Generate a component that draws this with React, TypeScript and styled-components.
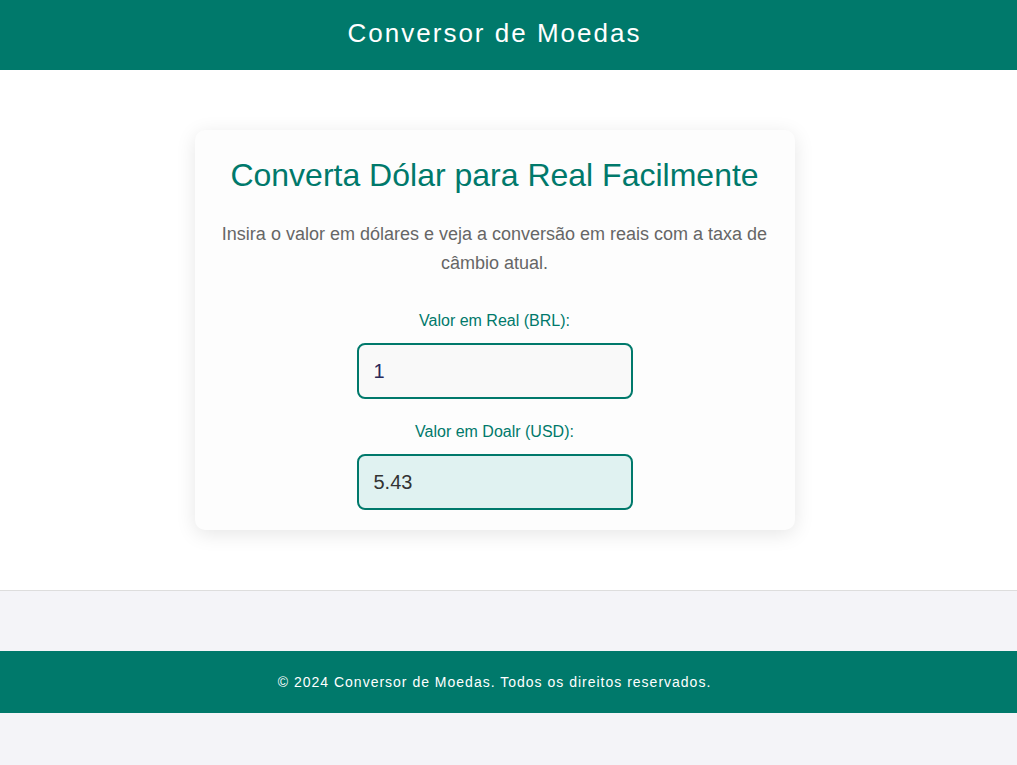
import React from "react";
import styled, { createGlobalStyle } from "styled-components";

const Global = createGlobalStyle`
  html, body { margin: 0; padding: 0; }
  body {
    background: #f4f4f8;
    font-family: "Liberation Sans", Arial, sans-serif;
  }
`;

const Header = styled.header`
  background: #00796b;
  height: 70px;
  box-sizing: border-box;
  display: flex;
  align-items: center;
  justify-content: center;
  padding: 0 28px 4px 0;
`;

const Brand = styled.h1`
  margin: 0;
  color: #ffffff;
  font-size: 26px;
  font-weight: 400;
  letter-spacing: 2px;
`;

const Main = styled.main`
  background: #ffffff;
  border-bottom: 1px solid #dddddd;
  padding: 60px 28px 60px 0;
  display: flex;
  justify-content: center;
`;

const Card = styled.section`
  width: 600px;
  box-sizing: border-box;
  background: #fdfdfd;
  border-radius: 10px;
  box-shadow: 0 4px 20px rgba(0, 0, 0, 0.1);
  padding: 26px 20px 20px;
  display: flex;
  flex-direction: column;
  align-items: center;
`;

const Title = styled.h2`
  margin: 0;
  color: #00796b;
  font-size: 32px;
  font-weight: 400;
  line-height: 38px;
`;

const Lead = styled.p`
  margin: 26px 0 0;
  color: #666666;
  font-size: 18px;
  line-height: 29px;
  text-align: center;
`;

const Field = styled.div<{ $first?: boolean }>`
  display: flex;
  flex-direction: column;
  align-items: center;
  margin-top: ${(p) => (p.$first ? "33px" : "23px")};
`;

const Label = styled.label`
  color: #00796b;
  font-size: 16px;
  line-height: 20px;
  margin-bottom: 12px;
`;

const Input = styled.input<{ $result?: boolean }>`
  width: 276px;
  height: 56px;
  box-sizing: border-box;
  border: 2px solid #00796b;
  border-radius: 8px;
  background: ${(p) => (p.$result ? "#e0f2f1" : "#f9f9f9")};
  color: ${(p) => (p.$result ? "#333333" : "#2a2a5a")};
  font-family: "Liberation Sans", Arial, sans-serif;
  font-size: 20px;
  padding: 0 15px;
  outline: none;
`;

const Spacer = styled.div`
  height: 60px;
`;

const Footer = styled.footer`
  background: #00796b;
  height: 62px;
  display: flex;
  align-items: center;
  justify-content: center;
  padding-right: 28px;
`;

const FootText = styled.p`
  margin: 0;
  color: #ffffff;
  font-size: 14px;
  letter-spacing: 1px;
`;

export default function App() {
  return (
    <>
      <Global />
      <Header>
        <Brand>Conversor de Moedas</Brand>
      </Header>
      <Main>
        <Card>
          <Title>Converta Dólar para Real Facilmente</Title>
          <Lead>
            Insira o valor em dólares e veja a conversão em reais com a taxa de
            câmbio atual.
          </Lead>
          <Field $first>
            <Label htmlFor="brl">Valor em Real (BRL):</Label>
            <Input id="brl" type="text" defaultValue="1" />
          </Field>
          <Field>
            <Label htmlFor="usd">Valor em Doalr (USD):</Label>
            <Input id="usd" type="text" $result readOnly value="5.43" />
          </Field>
        </Card>
      </Main>
      <Spacer />
      <Footer>
        <FootText>© 2024 Conversor de Moedas. Todos os direitos reservados.</FootText>
      </Footer>
    </>
  );
}
